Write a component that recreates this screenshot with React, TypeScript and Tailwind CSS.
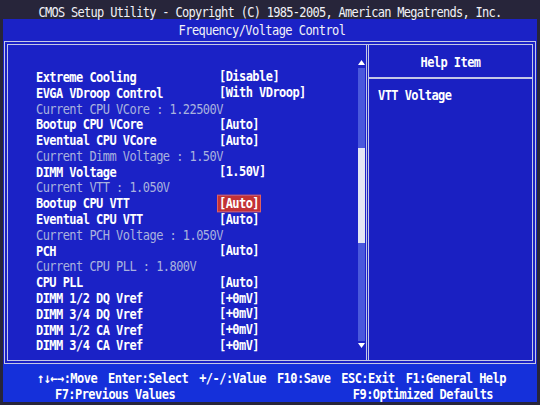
import React from "react";

type Row = { label: string; value?: string; dim?: boolean; sel?: boolean };

const rows: Row[] = [
  { label: "Extreme Cooling", value: "[Disable]" },
  { label: "EVGA VDroop Control", value: "[With VDroop]" },
  { label: "Current CPU VCore : 1.22500V", dim: true },
  { label: "Bootup CPU VCore", value: "[Auto]" },
  { label: "Eventual CPU VCore", value: "[Auto]" },
  { label: "Current Dimm Voltage : 1.50V", dim: true },
  { label: "DIMM Voltage", value: "[1.50V]" },
  { label: "Current VTT : 1.050V", dim: true },
  { label: "Bootup CPU VTT", value: "[Auto]", sel: true },
  { label: "Eventual CPU VTT", value: "[Auto]" },
  { label: "Current PCH Voltage : 1.050V", dim: true },
  { label: "PCH", value: "[Auto]" },
  { label: "Current CPU PLL : 1.800V", dim: true },
  { label: "CPU PLL", value: "[Auto]" },
  { label: "DIMM 1/2 DQ Vref", value: "[+0mV]" },
  { label: "DIMM 3/4 DQ Vref", value: "[+0mV]" },
  { label: "DIMM 1/2 CA Vref", value: "[+0mV]" },
  { label: "DIMM 3/4 CA Vref", value: "[+0mV]" },
];

const font = "font-['DejaVu_Sans_Mono',monospace] text-[12px] tracking-[-0.55px]";
const tall = "inline-block scale-y-[1.18]";

export default function App() {
  return (
    <div className={`w-[540px] h-[405px] bg-[#27253a] overflow-hidden ${font}`}>
      <div className="h-[19px] flex items-center justify-center text-[#f2f2f8] tracking-[-0.7px] pt-[5px]">
        <span className={tall}>CMOS Setup Utility - Copyright (C) 1985-2005, American Megatrends, Inc.</span>
      </div>
      <div className="mx-[3px] h-[383px] bg-[#1b22c6] flex flex-col">
        <div className="h-[22px] flex items-center justify-center text-[#f2f2f8] pr-[16px]">
          <span className={tall}>Frequency/Voltage Control</span>
        </div>
        <div className="mx-[1px] h-[323px] border border-[#c4c8e6] p-[2px]">
          <div className="h-full border border-[#c4c8e6] flex">
            {/* Left panel */}
            <div className="w-[358px] flex">
              <div className="flex-1 pt-[24px] pl-[28px]">
                {rows.map((r, i) => (
                  <div key={i} className="h-[15.8px] flex items-center">
                    {r.dim ? (
                      <span className={`text-[#a9b2de] whitespace-pre ${tall}`}>{r.label}</span>
                    ) : (
                      <>
                        <span className={`w-[183px] font-bold text-white whitespace-pre ${tall}`}>{r.label}</span>
                        <span
                          className={`font-bold text-white whitespace-pre leading-[13px] ${tall} ${
                            r.sel ? "bg-[#c23236] px-[1px] -ml-[1px] outline outline-1 outline-[#e06060]" : ""
                          }`}
                        >
                          {r.value}
                        </span>
                      </>
                    )}
                  </div>
                ))}
              </div>
              <div className="w-[7px] mr-[1px] flex flex-col items-center pt-[15px]">
                <svg width="7" height="5" viewBox="0 0 7 5">
                  <path d="M3.5 0 L7 5 L0 5 Z" fill="#ffffff" />
                </svg>
                <div className="mt-[3px] w-[7px] h-[273px] bg-[#4a58dc] flex flex-col">
                  <div className="h-[80px]" />
                  <div className="h-[95px] bg-[#e4e6f4]" />
                </div>
                <svg className="mt-[2px]" width="7" height="5" viewBox="0 0 7 5">
                  <path d="M0 0 L7 0 L3.5 5 Z" fill="#ffffff" />
                </svg>
              </div>
            </div>
            {/* Divider */}
            <div className="w-[3px] border-x border-[#c4c8e6]" />
            {/* Right panel */}
            <div className="flex-1 flex flex-col bg-[#1a20c2]">
              <div className="h-[32px] flex items-center justify-center font-bold text-white pt-[2px]">
                <span className={tall}>Help Item</span>
              </div>
              <div className="h-[2px] bg-[#c4c8e6]" />
              <div className="pl-[9px] pt-[7px] font-bold text-white">
                <span className={tall}>VTT Voltage</span>
              </div>
            </div>
          </div>
        </div>
        <div className="flex-1 bg-[#1530da] pt-[6px] font-bold text-white">
          <div className="h-[16px] flex items-center gap-[11px] pl-[34px] whitespace-pre">
            <span className={tall}>↑↓←→:Move</span>
            <span className={tall}>Enter:Select</span>
            <span className={tall}>+/-/:Value</span>
            <span className={tall}>F10:Save</span>
            <span className={tall}>ESC:Exit</span>
            <span className={tall}>F1:General Help</span>
          </div>
          <div className="h-[16px] flex items-center justify-between pl-[52px] pr-[44px] whitespace-pre">
            <span className={tall}>F7:Previous Values</span>
            <span className={tall}>F9:Optimized Defaults</span>
          </div>
        </div>
      </div>
    </div>
  );
}
